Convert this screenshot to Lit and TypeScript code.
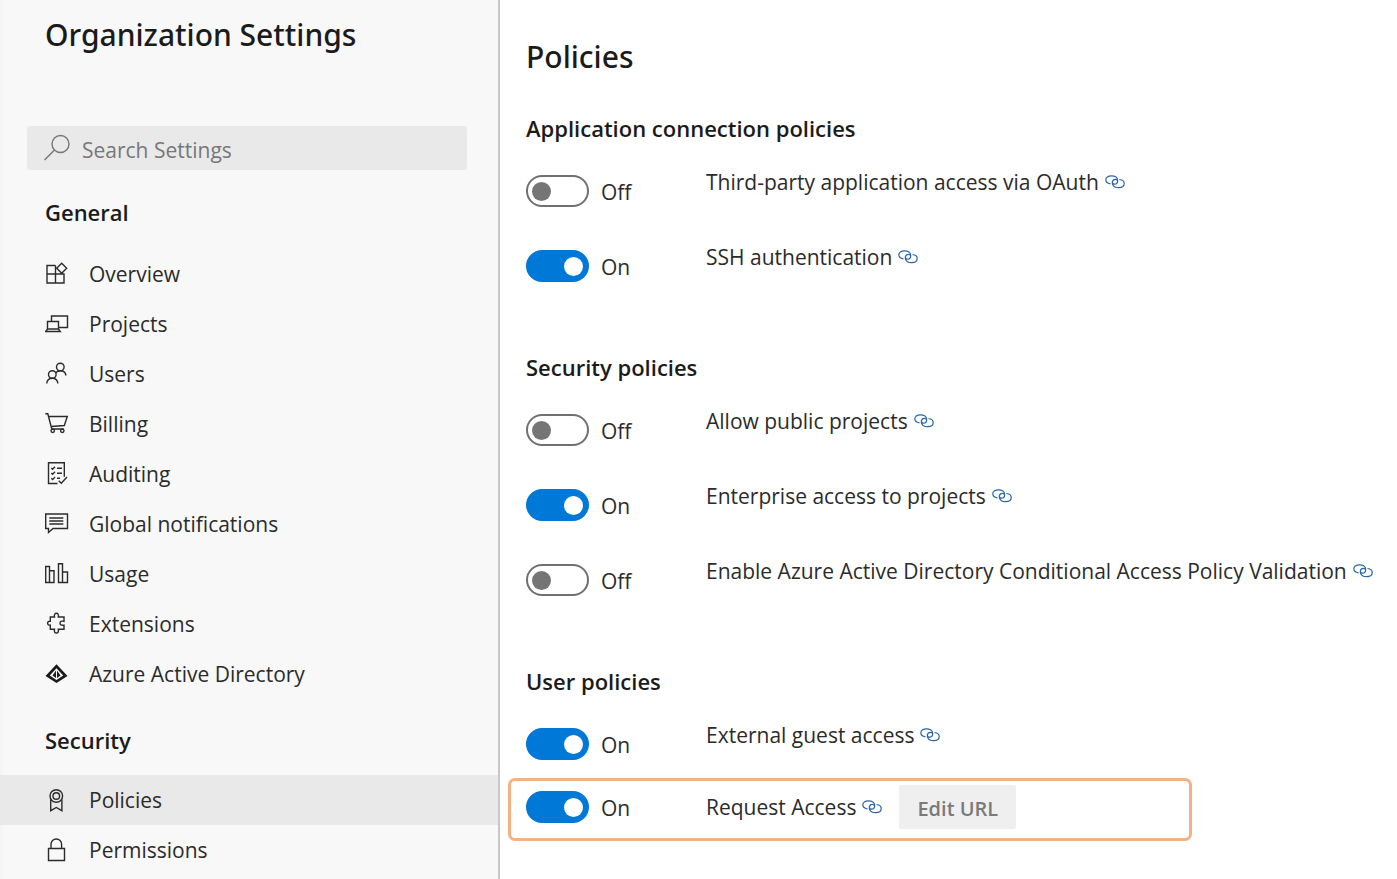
import { LitElement, html, css, svg } from "lit";
import { customElement, property } from "lit/decorators.js";
import { classMap } from "lit/directives/class-map.js";

const icons: Record<string, unknown> = {
  overview: svg`<path d="M10.5 3.500H2v17.500h17v-9H2M10.500 3.500v17.500M16.700 1.200l5 5-5 5-5-5z"/>`,
  projects: svg`<path d="M6.5 9V4h16v11.5H14M2.5 17V9.5h11V17M2.5 17L.7 19.5h14.6L13.5 17z"/>`,
  users: svg`<circle cx="15.3" cy="5" r="3.8"/><path d="M10.5 11c1.3-1.5 2.8-2.2 4.8-2.2 3.2 0 5.2 2 5.7 4.7"/><circle cx="7.3" cy="12.5" r="3.8"/><path d="M1.7 21.5c.4-3.2 2.6-5.2 5.6-5.2s5.2 2 5.6 5.2"/>`,
  billing: svg`<path d="M.3 1.7h2.5l4 15.3h12M4 4.5h18.3l-3 9L6.2 14.5"/><circle cx="7.7" cy="18.8" r="1.7"/><circle cx="17.3" cy="18.8" r="1.7"/>`,
  auditing: svg`<path d="M12.5 21.5H3.5V.7h15.8v14M6.3 6l1.3 1.3 2.4-2.600M6.300 11l1.300 1.300L10 9.700M6.300 16.300l1.300 1.300L10 15M12 6.200h5M12 11.200h5M12 16.300h3M13.700 18.700l2.600 2.600 5.700-6.300"/>`,
  notifications: svg`<path d="M.7 2h21.8v14.5H8l-4.500 4v-4H.7zM4.300 6h14M4.300 9h14M4.300 12h14"/>`,
  usage: svg`<path d="M.7 4.5h3.8v16H.7zM4.5 8.7H9v11.8H4.500M13.500 1.700h4v18.800h-4zM17.500 10h5v10.500h-5"/>`,
  extensions: svg`<path d="M5.300 5h4.200c-.6-2.400.4-3.700 1.900-3.700s2.500 1.300 1.900 3.700H19v4.300c-2.800-.6-4 .4-4 1.900s1.200 2.500 4 1.900v4.200h-5.700c.6 2.400-.4 3.700-1.900 3.700s-2.500-1.300-1.900-3.700H5.300v-4.200c-1.700.2-2.700-.6-2.700-1.900s1-2.100 2.700-1.900z"/>`,
  directory: svg`<path class="fill" fill-rule="evenodd" d="M11.5 2.200L22.500 14l-11 7L.5 14zM11.500 6.200L4.800 13.500l6.700 4.500 6.700-4.500z"/><path class="fill" d="M11 8.500v7.500L7.500 13.500zM12 8.500v7.500l3.500-2.500z"/>`,
  policies: svg`<circle cx="11.3" cy="8" r="6.3"/><circle cx="11.3" cy="8" r="3.3"/><path d="M5.7 11.5V22.7l5.600-3.200 5.600 3.200V11.500"/>`,
  permissions: svg`<path d="M3.5 10.5h16v12h-16zM6 10.5V6.3a5.3 5.3 0 0 1 10.6 0v4.2"/>`,
};

interface NavItem {
  label: string;
  icon: string;
  active?: boolean;
}

const general: NavItem[] = [
  { label: "Overview", icon: "overview" },
  { label: "Projects", icon: "projects" },
  { label: "Users", icon: "users" },
  { label: "Billing", icon: "billing" },
  { label: "Auditing", icon: "auditing" },
  { label: "Global notifications", icon: "notifications" },
  { label: "Usage", icon: "usage" },
  { label: "Extensions", icon: "extensions" },
  { label: "Azure Active Directory", icon: "directory" },
];

const security: NavItem[] = [
  { label: "Policies", icon: "policies", active: true },
  { label: "Permissions", icon: "permissions" },
];

@customElement("settings-nav")
class SettingsNav extends LitElement {
  static styles = css`
    :host {
      display: block;
      box-sizing: border-box;
      flex: 0 1 500px;
      border-right: 2px solid #c8c8c8;
      background: linear-gradient(90deg, #f3f3f3, #f8f8f8 5px);
      color: #1b1b1b;
    }
    .title {
      margin: 0;
      padding: 13px 0 0 45px;
      font-family: "Noto Sans", "Open Sans", sans-serif;
      font-size: 30px;
      line-height: 44px;
      font-weight: 500;
    }
    .search {
      display: flex;
      align-items: center;
      gap: 12px;
      height: 44px;
      margin: 69px 31px 0 27px;
      padding: 0 16px;
      border-radius: 3px;
      background: #e9e9e9;
    }
    .search-icon {
      flex: none;
      width: 27px;
      height: 28px;
      fill: none;
      stroke: #777;
      stroke-width: 1.4;
    }
    .field {
      flex: 1;
      min-width: 0;
      padding: 4px 0 0;
      border: 0;
      outline: 0;
      background: none;
      font: inherit;
      font-size: 21px;
      color: #333;
    }
    .field::placeholder {
      color: #777;
      opacity: 1;
    }
    .heading {
      margin: 0;
      padding: 27px 0 22px 45px;
      font-size: 22px;
      line-height: 30px;
      font-weight: 600;
    }
    .list {
      margin: 0;
      padding: 0;
      list-style: none;
    }
    .list + .heading {
      padding: 26px 0 20px 45px;
    }
    .item {
      display: flex;
      align-items: center;
      gap: 20px;
      height: 50px;
      padding-left: 45px;
      font-size: 21px;
      color: #2b2b2b;
      text-decoration: none;
    }
    .active {
      background: #e9e9e9;
    }
    .icon {
      flex: none;
      width: 24px;
      height: 24px;
      fill: none;
      stroke: #2b2b2b;
      stroke-width: 1.4;
    }
    .fill {
      fill: #1b1b1b;
      stroke: none;
    }
  `;

  private list(items: NavItem[]) {
    return html`<ul class="list">
      ${items.map(
        (item) => html`<li>
          <a class=${classMap({ item: true, active: !!item.active })} href="#">
            <svg class="icon" viewBox="0 0 24 24" aria-hidden="true">${icons[item.icon]}</svg>
            <span>${item.label}</span>
          </a>
        </li>`
      )}
    </ul>`;
  }

  render() {
    return html`
      <h1 class="title">Organization Settings</h1>
      <label class="search">
        <svg class="search-icon" viewBox="0 0 27 28" aria-hidden="true">
          <circle cx="17.5" cy="10" r="8.5" />
          <path d="M11.5 16L1.5 26" />
        </svg>
        <input class="field" type="search" placeholder="Search Settings" aria-label="Search Settings" />
      </label>
      <nav>
        <h2 class="heading">General</h2>
        ${this.list(general)}
        <h2 class="heading">Security</h2>
        ${this.list(security)}
      </nav>
    `;
  }
}

@customElement("policy-row")
class PolicyRow extends LitElement {
  @property() label = "";
  @property({ type: Boolean }) on = false;
  @property({ type: Boolean, reflect: true }) highlight = false;

  static styles = css`
    :host {
      display: grid;
      grid-template-columns: 180px 1fr;
      align-items: start;
      font-size: 21px;
      line-height: 30px;
      color: #2b2b2b;
    }
    :host([highlight]) {
      box-sizing: border-box;
      align-items: center;
      max-width: 684px;
      margin-left: -18px;
      padding: 4px 15px 9px;
      border: 3px solid #f4b183;
      border-radius: 7px;
    }
    .switch {
      display: flex;
      align-items: center;
      gap: 12px;
      padding-top: 8px;
    }
    :host([highlight]) .switch {
      padding-top: 0;
    }
    .toggle {
      appearance: none;
      box-sizing: border-box;
      flex: none;
      display: flex;
      align-items: center;
      width: 63px;
      height: 32px;
      margin: 0;
      padding: 0 4px;
      border: 2px solid #707070;
      border-radius: 16px;
      background: #fff;
    }
    .toggle::before {
      content: "";
      width: 19px;
      height: 19px;
      border-radius: 50%;
      background: #757575;
    }
    .toggle:checked {
      justify-content: flex-end;
      border-color: #0078d7;
      background: #0078d7;
    }
    .toggle:checked::before {
      background: #fff;
    }
    .state {
      padding-top: 2px;
    }
    .name {
      display: flex;
      align-items: center;
      white-space: nowrap;
    }
    .link {
      display: flex;
      margin-left: 6px;
    }
    .link-icon {
      width: 20px;
      height: 14px;
      fill: none;
      stroke: #2a66a8;
      stroke-width: 1.2;
    }
  `;

  private flip(e: Event) {
    this.on = (e.target as HTMLInputElement).checked;
  }

  render() {
    return html`
      <label class="switch">
        <input
          class="toggle"
          type="checkbox"
          role="switch"
          aria-labelledby="name"
          .checked=${this.on}
          @change=${this.flip}
        />
        <span class="state">${this.on ? "On" : "Off"}</span>
      </label>
      <div class="name">
        <span id="name">${this.label}</span>
        <a class="link" href="#" aria-label="Learn more">
          <svg class="link-icon" viewBox="0 0 20 14" aria-hidden="true">
            <path d="M5.5 8.8C2.600 8.500.8 7 .8 4.800.8 2.400 3 .8 6.300.8c3.800 0 6.400 1.900 6.400 4.600 0 2.200-1.400 3.700-3.200 3.700-1.200 0-2-.6-2-1.500" />
            <path d="M14.500 4.500c2.900.3 4.700 1.900 4.700 4.100 0 2.500-2.200 4.100-5.500 4.100-3.800 0-6.400-1.900-6.400-4.600 0-2.200 1.400-3.700 3.200-3.700 1.200 0 2 .6 2 1.500" />
          </svg>
        </a>
        <slot></slot>
      </div>
    `;
  }
}

@customElement("app-root")
class AppRoot extends LitElement {
  static styles = css`
    :host {
      display: flex;
      min-height: 100vh;
      background: #fff;
      font-family: "Open Sans", "Noto Sans", sans-serif;
      color: #1b1b1b;
    }
    .main {
      flex: 1;
      min-width: 0;
      padding: 35px 24px 38px 26px;
    }
    .title {
      margin: 0 0 33px;
      font-family: "Noto Sans", "Open Sans", sans-serif;
      font-size: 30px;
      line-height: 44px;
      font-weight: 500;
    }
    .group {
      display: flex;
      flex-direction: column;
      gap: 35px;
      margin-bottom: 69px;
    }
    .group:last-child {
      gap: 18px;
      margin-bottom: 0;
    }
    .section-title {
      margin: 0 0 23px;
      font-size: 22px;
      line-height: 32px;
      font-weight: 600;
    }
    .edit {
      height: 44px;
      margin-left: 17px;
      padding: 4px 18px 0;
      border: 0;
      border-radius: 2px;
      background: #efefef;
      color: #7a7a7a;
      font: inherit;
      font-size: 20px;
      font-weight: 600;
    }
  `;

  render() {
    return html`
      <settings-nav></settings-nav>
      <main class="main">
        <h1 class="title">Policies</h1>
        <h2 class="section-title">Application connection policies</h2>
        <section class="group">
          <policy-row label="Third-party application access via OAuth"></policy-row>
          <policy-row label="SSH authentication" on></policy-row>
        </section>
        <h2 class="section-title">Security policies</h2>
        <section class="group">
          <policy-row label="Allow public projects"></policy-row>
          <policy-row label="Enterprise access to projects" on></policy-row>
          <policy-row label="Enable Azure Active Directory Conditional Access Policy Validation"></policy-row>
        </section>
        <h2 class="section-title">User policies</h2>
        <section class="group">
          <policy-row label="External guest access" on></policy-row>
          <policy-row label="Request Access" on highlight>
            <button class="edit" type="button">Edit URL</button>
          </policy-row>
        </section>
      </main>
    `;
  }
}
